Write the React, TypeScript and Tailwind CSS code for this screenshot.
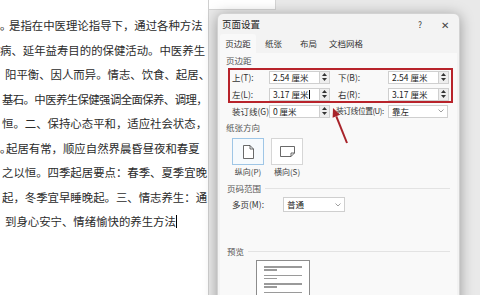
import type { ReactNode } from "react"

// lines of the document behind the dialog; lead = width kept for a clipped leading full stop
const DOC_LINES: { text: string; offset: number; lead?: number; tight?: boolean }[] = [
  { text: "是指在中医理论指导下，通过各种方法", offset: 0, lead: 9 },
  { text: "病、延年益寿目的的保健活动。中医养生", offset: 0 },
  { text: "阳平衡、因人而异。情志、饮食、起居、", offset: 5 },
  { text: "基石。中医养生保健强调全面保养、调理，", offset: 2, tight: true },
  { text: "恒。二、保持心态平和，适应社会状态，", offset: 2 },
  { text: "起居有常，顺应自然界晨昏昼夜和春夏", offset: 0, lead: 6 },
  { text: "之以恒。四季起居要点：春季、夏季宜晚", offset: 2 },
  { text: "起，冬季宜早睡晚起。三、情志养生：通", offset: 2 },
]

const FONT = { fontFamily: '"Noto Sans CJK SC", "Noto Sans", sans-serif' }

function Spinner() {
  return (
    <div className="flex h-[13px] w-[10px] flex-col items-center justify-center gap-[2px] border border-l-0 border-[#cfcfcf] bg-[#eeeeee]">
      <svg width="5" height="3" viewBox="0 0 5 3">
        <polygon points="2.5,0 5,3 0,3" fill="#333" />
      </svg>
      <svg width="5" height="3" viewBox="0 0 5 3">
        <polygon points="0,0 5,0 2.5,3" fill="#333" />
      </svg>
    </div>
  )
}

function Field({ value, caret }: { value: string; caret?: boolean }) {
  return (
    <div className="flex items-center">
      <div className="flex h-[13px] w-[51px] items-center border border-[#cfcfcf] bg-white pl-[3px] text-[8.5px] text-[#222]">
        {value}
        {caret && <span className="ml-[1px] inline-block h-[9px] w-px bg-black" />}
      </div>
      <Spinner />
    </div>
  )
}

function Select({ value, width }: { value: string; width: string }) {
  return (
    <div className={`flex h-full items-center justify-between border border-[#cfcfcf] bg-white pl-[3px] pr-[3px] text-[8.5px] text-[#222] ${width}`}>
      <span>{value}</span>
      <svg width="6" height="4" viewBox="0 0 6 4">
        <polyline points="0.5,0.5 3,3 5.5,0.5" fill="none" stroke="#888" strokeWidth="0.8" />
      </svg>
    </div>
  )
}

function MarginRow({ a, av, b, bv, caret }: { a: string; av: string; b: string; bv: string; caret?: boolean }) {
  return (
    <div className="flex h-[14px] items-center text-[8.5px] text-[#333]">
      <span className="w-[39px] pl-[2px]">{a}</span>
      <Field value={av} caret={caret} />
      <span className="w-[58px] pl-[8px]">{b}</span>
      <Field value={bv} />
    </div>
  )
}

function GroupLabel({ children, line }: { children: ReactNode; line?: boolean }) {
  return (
    <div className="flex h-full items-center gap-[4px] text-[8.5px] text-[#555]">
      <span>{children}</span>
      {line && <div className="mr-[7px] h-px flex-1 bg-[#e3e3e3]" />}
    </div>
  )
}

export default function App() {
  return (
    <div className="relative h-[295px] w-[480px] overflow-hidden bg-[#e9e9e9]" style={FONT}>
      {/* document page */}
      <div className="flex h-full">
        <div className="h-full w-[209px] overflow-hidden border-r border-[#cfcfcf] bg-white pt-[13px] text-[11.4px] leading-[24.5px] text-[#2b2b2b]">
          {DOC_LINES.map((l) => (
            <div
              key={l.text}
              className={l.tight ? "whitespace-nowrap tracking-[-0.6px]" : "whitespace-nowrap"}
              style={{ marginLeft: l.offset }}
            >
              {l.lead && (
                <span className="inline-block" style={{ width: l.lead }}>
                  ｡
                </span>
              )}
              {l.text}
            </div>
          ))}
          <div className="flex items-center whitespace-nowrap pl-[5px]">
            到身心安宁、情绪愉快的养生方法
            <span className="inline-block h-[13px] w-px bg-black" />
          </div>
        </div>
        <div className="flex flex-1 flex-col">
          <div className="h-[10px] w-[67px] border-b border-r border-[#d4d4d4] bg-white" />
        </div>
      </div>

      {/* page setup dialog */}
      <div className="absolute left-[217px] top-[13px] flex w-[243px] flex-col rounded-t-[6px] border border-[#d2d2d2] bg-[#f3f3f3] shadow-[0_2px_14px_rgba(0,0,0,0.35)]">
        <div className="flex h-[20px] shrink-0 items-center justify-between pl-[4px] pr-[10px] text-[9.5px] text-[#222]">
          <span>页面设置</span>
          <div className="flex items-center gap-[19px] text-[10px] text-[#444]">
            <span className="text-[8.5px]">?</span>
            <span>✕</span>
          </div>
        </div>
        <div className="flex h-[19px] shrink-0 items-center pl-[2px] text-[8.5px] text-[#333]">
          <div className="flex h-full w-[36px] items-center justify-center rounded-t-[3px] bg-[#f9f9f9]">页边距</div>
          <span className="ml-[9px]">纸张</span>
          <span className="ml-[18px]">布局</span>
          <span className="ml-[12px]">文档网格</span>
        </div>

        <div className="mx-[2px] flex flex-col bg-[#f9f9f9]">
          <div className="h-[15px] pl-[6px]">
            <GroupLabel>页边距</GroupLabel>
          </div>

          <div className="ml-[8px] flex h-[35px] w-[225px] flex-col gap-[3px] border-2 border-[#b8232b]">
            <MarginRow a="上(T):" av="2.54 厘米" b="下(B):" bv="2.54 厘米" />
            <MarginRow a="左(L):" av="3.17 厘米" b="右(R):" bv="3.17 厘米" caret />
          </div>

          <div className="ml-[10px] mt-[1px] flex h-[14px] items-center text-[8.5px] text-[#333]">
            <span className="w-[39px] whitespace-nowrap pl-[2px]">装订线(G):</span>
            <Field value="0 厘米" />
            <span className="w-[58px] whitespace-nowrap pl-[6px] text-[7.8px] tracking-[-0.5px]">装订线位置(U):</span>
            <div className="h-[13px]">
              <Select value="靠左" width="w-[60px]" />
            </div>
          </div>

          <div className="mt-[1px] h-[16px] pl-[6px]">
            <GroupLabel>纸张方向</GroupLabel>
          </div>

          <div className="ml-[12px] mt-[3px] flex gap-[7px]">
            <div className="flex h-[27px] w-[32px] items-center justify-center border border-[#9fc6e6] bg-[#f6fafd]">
              <svg width="11" height="14" viewBox="0 0 11 14">
                <path d="M0.5,0.5 H7 L10.5,4 V13.5 H0.5 Z M7,0.5 V4 H10.5" fill="white" stroke="#444" strokeWidth="0.8" />
              </svg>
            </div>
            <div className="flex h-[27px] w-[32px] items-center justify-center border border-[#d6d6d6] bg-white">
              <svg width="15" height="11" viewBox="0 0 15 11">
                <path d="M0.5,0.5 H14.5 V7 L11,10.5 H0.5 Z M14.5,7 H11 V10.5" fill="white" stroke="#444" strokeWidth="0.8" />
              </svg>
            </div>
          </div>
          <div className="ml-[12px] mt-[1px] flex h-[12px] gap-[7px] text-[8px] text-[#444]">
            <span className="w-[32px] text-center">纵向(P)</span>
            <span className="w-[32px] text-center">横向(S)</span>
          </div>

          <div className="mt-[3px] h-[14px] pl-[7px]">
            <GroupLabel line>页码范围</GroupLabel>
          </div>

          <div className="ml-[12px] mt-[2px] flex h-[15px] items-center text-[8.5px] text-[#333]">
            <span className="w-[51px]">多页(M):</span>
            <Select value="普通" width="w-[62px]" />
          </div>

          <div className="mt-[32px] h-[14px] pl-[7px]">
            <GroupLabel line>预览</GroupLabel>
          </div>

          <div className="ml-[36px] mt-[2px] flex h-[60px] w-[54px] flex-col gap-[1.5px] border border-[#8c8c8c] bg-white px-[7px] pt-[5px]">
            {[0, 1, 2, 3, 4, 5].map((i) => (
              <div key={i} className="flex flex-col gap-[1.5px] pb-[2.5px]">
                <div className="h-[1.5px] w-full bg-[#9a9a9a]" />
                <div className="h-[1.5px] w-[13px] bg-[#9a9a9a]" />
              </div>
            ))}
          </div>
        </div>
      </div>

      {/* annotation arrow */}
      <svg className="absolute left-[325px] top-[100px]" width="30" height="50" viewBox="0 0 30 50">
        <line x1="22" y1="43" x2="11.3" y2="16.3" stroke="#a8232a" strokeWidth="2" />
        <polygon points="8,8 15.05,14.87 7.63,17.83" fill="#a8232a" />
      </svg>
    </div>
  )
}
